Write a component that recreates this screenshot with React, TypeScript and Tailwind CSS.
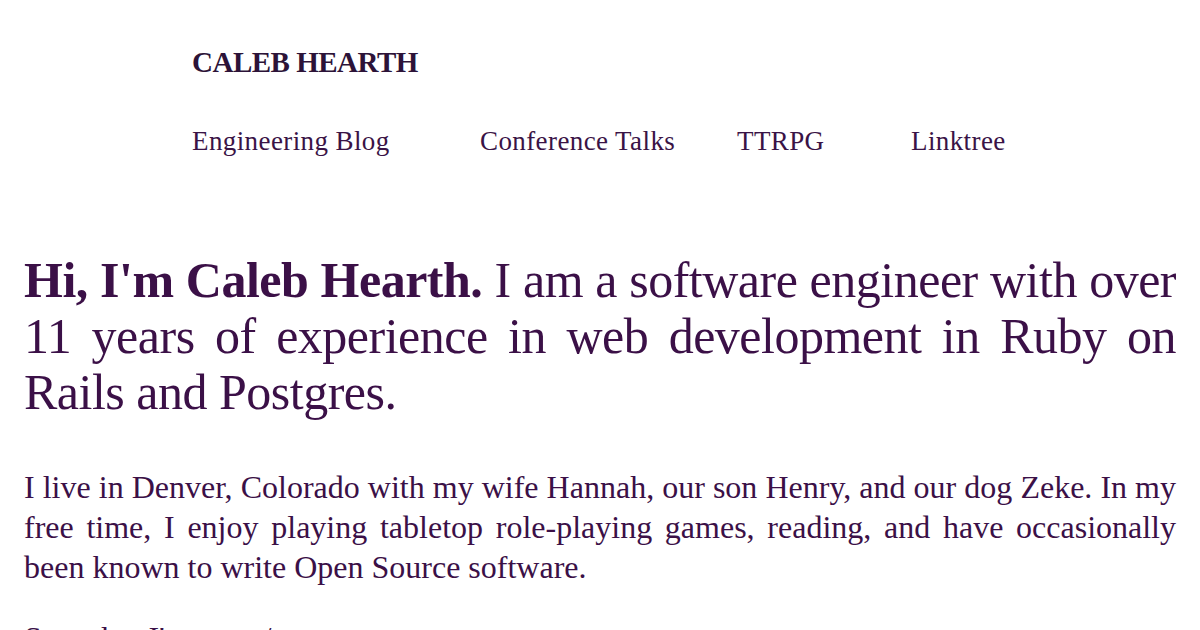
const navLinks = ["Engineering Blog", "Conference Talks", "TTRPG", "Linktree"]

const Line = ({ children, last }: { children: React.ReactNode, last?: boolean }) => (
    <span className={last ? "block" : "block text-justify [text-align-last:justify]"}>{children}</span>
)

export default function App() {
    return (
        <div className="min-h-screen bg-white text-[#3b1047] font-['Liberation_Serif',serif] overflow-hidden">
            <header className="mx-auto w-[816px] pt-[44px]">
                <h1 className="text-[29px] leading-[36px] font-semibold text-[#2c1338] tracking-[-0.5px]">CALEB HEARTH</h1>
                <nav className="mt-[45px] grid grid-cols-[288px_257px_174px_auto] text-[27px] leading-[32px] tracking-[0.4px] text-[#3a1346]">
                    {navLinks.map((link) => (
                        <a key={link} href="#" className="hover:underline">{link}</a>
                    ))}
                </nav>
            </header>
            <main className="px-6 mt-[95px]">
                <p className="text-[50px] leading-[56px] tracking-[-0.5px]">
                    <Line><strong className="font-bold">Hi, I'm Caleb Hearth.</strong> I am a software engineer with over</Line>
                    <Line>11 years of experience in web development in Ruby on</Line>
                    <Line last>Rails and Postgres.</Line>
                </p>
                <p className="mt-[47px] text-[32px] leading-[40px]">
                    <Line>I live in Denver, Colorado with my wife Hannah, our son Henry, and our dog Zeke. In my</Line>
                    <Line>free time, I enjoy playing tabletop role-playing games, reading, and have occasionally</Line>
                    <Line last>been known to write Open Source software.</Line>
                </p>
                <p className="mt-[31px] text-[32px] leading-[40px]">See what I'm up to/now</p>
            </main>
        </div>
    )
}
